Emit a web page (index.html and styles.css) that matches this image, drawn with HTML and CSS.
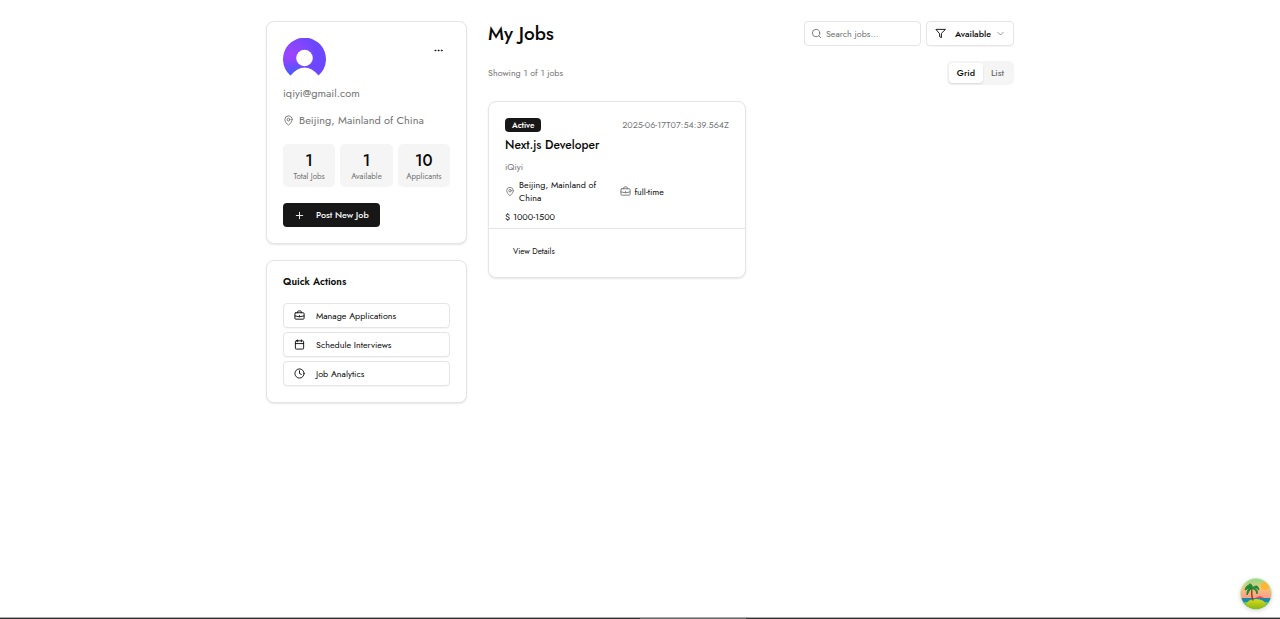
FILE: index.html
```html
<!DOCTYPE html>
<html lang="en">
<head>
<meta charset="utf-8">
<title>My Jobs</title>
<link rel="stylesheet" href="styles.css">
</head>
<body>
<svg class="defs" aria-hidden="true">
  <symbol id="pin" viewBox="0 0 24 24"><path d="M20 10c0 5-5.500 10.200-7.400 11.800a1 1 0 0 1-1.200 0C9.500 20.200 4 15 4 10a8 8 0 0 1 16 0z"/><circle cx="12" cy="10" r="3"/></symbol>
  <symbol id="case" viewBox="0 0 24 24"><path d="M12 12v2M16 6V4a2 2 0 0 0-2-2h-4a2 2 0 0 0-2 2v2M2 13q10 4 20 0"/><rect x="2" y="6" width="20" height="14" rx="2"/></symbol>
</svg>
<div class="page">
  <aside class="sidebar">
    <section class="card profile">
      <div class="profile-top">
        <svg class="avatar" viewBox="0 0 43 43" role="img" aria-label="Profile picture">
          <defs>
            <radialGradient id="violet" cx="0.180" cy="0.450" r="0.600"><stop offset="0" stop-color="#a044ff"/><stop offset="1" stop-color="#6c47ff"/></radialGradient>
            <radialGradient id="blue" cx="0.250" cy="0.950" r="0.400"><stop offset="0" stop-color="#3f63ff"/><stop offset="1" stop-color="#5a50ff" stop-opacity="0"/></radialGradient>
          </defs>
          <path d="M7.500 37.500A21.500 21.500 0 1 1 35.500 37.500Q29 29.500 21.500 29.500T7.500 37.500z" fill="url(#violet)"/>
          <path d="M7.500 37.500A21.500 21.500 0 1 1 35.500 37.500Q29 29.500 21.500 29.500T7.500 37.500z" fill="url(#blue)"/>
          <circle cx="21.500" cy="20" r="8.300" fill="#fff"/>
        </svg>
        <button class="more" aria-label="More options"><svg viewBox="0 0 24 24"><circle cx="12" cy="12" r="1"/><circle cx="19" cy="12" r="1"/><circle cx="5" cy="12" r="1"/></svg></button>
      </div>
      <p class="email">iqiyi@gmail.com</p>
      <p class="place"><svg class="icon"><use href="#pin"/></svg>Beijing, Mainland of China</p>
      <div class="stats">
        <div class="stat"><strong>1</strong><span>Total Jobs</span></div>
        <div class="stat"><strong>1</strong><span>Available</span></div>
        <div class="stat"><strong>10</strong><span>Applicants</span></div>
      </div>
      <button class="post"><svg class="icon" viewBox="0 0 24 24"><path d="M5 12h14M12 5v14"/></svg>Post New Job</button>
    </section>
    <section class="card actions">
      <h2>Quick Actions</h2>
      <div class="action-list">
        <button class="outline"><svg class="icon"><use href="#case"/></svg>Manage Applications</button>
        <button class="outline"><svg class="icon" viewBox="0 0 24 24"><path d="M8 2v4M16 2v4M3 10h18"/><rect x="3" y="4" width="18" height="18" rx="2"/></svg>Schedule Interviews</button>
        <button class="outline"><svg class="icon" viewBox="0 0 24 24"><circle cx="12" cy="12" r="10"/><path d="M12 6v6l4 2"/></svg>Job Analytics</button>
      </div>
    </section>
  </aside>
  <main class="main">
    <header class="heading">
      <h1>My Jobs</h1>
      <div class="tools">
        <label class="search"><svg class="icon" viewBox="0 0 24 24"><circle cx="11" cy="11" r="8"/><path d="m21 21-4.300-4.300"/></svg><input type="search" placeholder="Search jobs..." aria-label="Search jobs"></label>
        <button class="outline filter"><svg class="icon" viewBox="0 0 24 24"><path d="M22 3H2l8 9.460V19l4 2v-8.540z"/></svg>Available<svg class="icon chevron" viewBox="0 0 24 24"><path d="m5 9 7 7 7-7"/></svg></button>
      </div>
    </header>
    <div class="summary">
      <p>Showing 1 of 1 jobs</p>
      <div class="tabs" role="tablist">
        <button class="tab selected" role="tab" aria-selected="true">Grid</button>
        <button class="tab" role="tab" aria-selected="false">List</button>
      </div>
    </div>
    <div class="jobs">
      <article class="card job">
        <div class="job-body">
          <div class="job-top"><span class="badge">Active</span><time>2025-06-17T07:54:39.564Z</time></div>
          <h3>Next.js Developer</h3>
          <p class="company">iQiyi</p>
          <div class="facts">
            <div class="fact"><svg class="icon"><use href="#pin"/></svg><span>Beijing, Mainland of China</span></div>
            <div class="fact"><svg class="icon wide"><use href="#case"/></svg><span>full-time</span></div>
          </div>
          <p class="pay">$ 1000-1500</p>
        </div>
        <footer class="job-foot"><button class="details">View Details</button></footer>
      </article>
    </div>
  </main>
</div>
<button class="island" aria-label="Open assistant">
  <svg viewBox="0 0 32 32">
    <defs>
      <linearGradient id="sky" x2="0" y2="1"><stop offset="0" stop-color="#7be08c"/><stop offset="0.300" stop-color="#f3c47c"/><stop offset="0.600" stop-color="#ff9f88"/></linearGradient>
      <linearGradient id="hill" x2="0" y2="1"><stop offset="0" stop-color="#d6dc1d"/><stop offset="1" stop-color="#7fae10"/></linearGradient>
      <clipPath id="disc"><circle cx="16" cy="16" r="15"/></clipPath>
    </defs>
    <circle cx="16" cy="16" r="16" fill="#c3e6ae"/>
    <g clip-path="url(#disc)">
      <rect width="32" height="32" fill="url(#sky)"/>
      <circle cx="25" cy="8" r="4" fill="#ffb52e"/>
      <rect y="20" width="32" height="12" fill="#1f88a8"/><rect y="24" width="32" height="8" fill="#5cc76c"/>
      <path d="M15 20l5-2 4 2z" fill="#e9436a"/>
      <ellipse cx="16" cy="27" rx="10" ry="6" fill="url(#hill)"/>
      <path d="M12 10q-1 7 1 12" fill="none" stroke="#8b4a1f" stroke-width="1.500"/>
      <path d="M12 10Q7 4 5 12q3-2 7-2-6 1-5 7 2-5 5-7 5 2 5 6 2-5-5-6 5-1 7 2-1-7-7-2 1-4-3-4 0 3 3 4z" fill="#188b36" stroke="#188b36" stroke-width="1"/>
    </g>
  </svg>
</button>
<div class="edge"><span></span></div>
</body>
</html>
```
FILE: styles.css
```css
* { box-sizing: border-box; }
body { margin: 0; min-height: 100vh; background: #fff; color: #0a0a0a; font-family: Jost, Lato, sans-serif; font-size: 9px; line-height: 14px; }
h1, h2, h3, p { margin: 0; }
h1, h2, h3 { font-weight: 600; }
button, input { font: inherit; color: inherit; }
button { margin: 0; cursor: pointer; }
svg { fill: none; stroke: currentColor; stroke-width: 2; stroke-linecap: round; stroke-linejoin: round; flex: none; }
.defs { position: absolute; width: 0; height: 0; }
.icon { width: 11px; height: 11px; }
.page { display: flex; align-items: flex-start; gap: 21px; max-width: 748px; margin: 0 auto; padding-top: 21px; }
.sidebar { display: flex; flex-direction: column; gap: 16px; width: 201px; flex: none; }
.card { border: 1px solid #e5e5e5; border-radius: 8px; background: #fff; box-shadow: 0 1px 2px rgba(0, 0, 0, 0.1); }
.profile { padding: 16px; }
.profile-top { display: flex; justify-content: space-between; align-items: flex-start; }
.avatar { width: 43px; height: 43px; stroke: none; }
.more { width: 24px; height: 24px; padding: 0; border: 0; background: none; display: grid; place-items: center; }
.more svg { width: 11px; height: 11px; }
.email, .place { color: #737373; font-size: 11px; }
.email { margin-top: 5px; }
.place { display: flex; align-items: center; gap: 5px; margin-top: 13px; }
.stats { display: grid; grid-template-columns: repeat(3, 1fr); gap: 5px; margin-top: 17px; }
.stat { display: flex; flex-direction: column; align-items: center; padding: 7px 0 5px; border-radius: 5px; background: #f5f5f5; }
.stat strong { font-size: 16px; line-height: 20px; font-weight: 500; }
.stat span { color: #737373; font-size: 8px; line-height: 11px; }
.post { display: flex; align-items: center; gap: 11px; height: 24px; margin-top: 16px; padding: 0 11px; border: 0; border-radius: 4px; background: #171717; color: #fafafa; font-weight: 500; }
.actions { padding: 12px 16px 16px; }
.actions h2 { font-size: 10px; line-height: 17px; }
.action-list { display: flex; flex-direction: column; gap: 4px; margin-top: 13px; }
.outline { display: flex; align-items: center; gap: 11px; height: 25px; padding: 0 10px; border: 1px solid #e5e5e5; border-radius: 4px; background: #fff; box-shadow: 0 1px 1px rgba(0, 0, 0, 0.04); }
.main { flex: 1; min-width: 0; }
.heading, .tools, .summary, .job-top { display: flex; align-items: center; justify-content: space-between; }
.heading h1 { font-size: 19px; line-height: 25px; }
.heading h1, .job h3 { font-weight: 500; }
.tools { gap: 5px; }
.search { display: flex; align-items: center; gap: 4px; width: 117px; height: 25px; padding: 0 6px; border: 1px solid #e5e5e5; border-radius: 4px; color: #737373; }
.search input { width: 100%; min-width: 0; padding: 0; border: 0; outline: 0; background: none; }
.search input::placeholder { color: #737373; opacity: 1; }
.filter { gap: 9px; padding: 0 8px; font-weight: 500; }
.filter .chevron { width: 9px; height: 9px; margin-left: -4px; color: #737373; }
.summary { margin-top: 15px; color: #737373; }
.tabs { display: flex; padding: 2px; border-radius: 5px; background: #f5f5f5; }
.tab { height: 20px; padding: 0 8px; border: 0; border-radius: 4px; background: none; font-weight: 500; }
.tab.selected { background: #fff; color: #0a0a0a; box-shadow: 0 1px 2px rgba(0, 0, 0, 0.12); }
.jobs { display: grid; grid-template-columns: repeat(2, 1fr); gap: 10px; margin-top: 16px; }
.job-body { padding: 16px 16px 5px; }
.badge { padding: 0 7px; border-radius: 4px; background: #171717; color: #fafafa; font-size: 8px; line-height: 14px; font-weight: 600; }
.job time, .company { color: #737373; }
.job h3 { margin-top: 4px; font-size: 12px; line-height: 18px; }
.company { margin-top: 6px; }
.company, .fact, .pay { line-height: 13px; }
.facts { display: grid; grid-template-columns: repeat(2, 1fr); gap: 5px; margin-top: 5px; }
.fact { display: flex; align-items: center; gap: 4px; }
.fact .icon { width: 10px; color: #737373; }
.fact .wide { width: 11px; }
.fact span { max-width: 82px; }
.pay { margin-top: 6px; }
.job-foot { padding: 10px 16px 15px; border-top: 1px solid #e5e5e5; }
.details { height: 23px; padding: 0 8px; border: 0; background: none; font-size: 8px; }
.island { position: fixed; right: 8px; bottom: 9px; width: 32px; height: 32px; padding: 0; border: 0; border-radius: 50%; background: none; box-shadow: 0 1px 4px rgba(0, 0, 0, 0.15); }
.island svg { display: block; width: 32px; height: 32px; stroke: none; }
.edge { position: fixed; left: 0; right: 0; bottom: 0; height: 2px; border-top: 1px solid #aaa; background: #333; }
.edge span { display: block; width: 106px; height: 1px; margin-left: 50%; background: #666; }
```
